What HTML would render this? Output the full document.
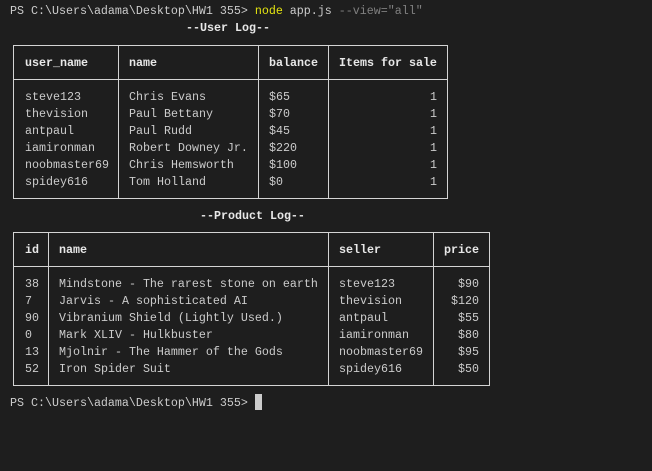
<!DOCTYPE html>
<html><head><style>
body{margin:0;width:652px;height:471px;background:#1e1e1e;overflow:hidden;position:relative;font-family:"Liberation Mono",monospace;font-size:11.67px;color:#cccccc}
pre{margin:0;position:absolute;font:inherit;line-height:17px;white-space:pre}
.b{font-weight:bold;color:#e8e8e8}
.r{text-align:right}
.box{position:absolute;border:1px solid #d4d4d4}
.v{position:absolute;width:1px;background:#d4d4d4}
.h{position:absolute;height:1px;background:#d4d4d4}
</style></head><body>
<pre style="left:10px;top:3px">PS C:\Users\adama\Desktop\HW1 355&gt; <span style="color:#e5e510">node</span> app.js <span style="color:#808080">--view="all"</span></pre>
<pre class="b" style="left:186px;top:20px">--User Log--</pre>

<div class="box" style="left:13px;top:45px;width:433px;height:152px"></div>
<div class="v" style="left:118px;top:45px;height:153px"></div>
<div class="v" style="left:258px;top:45px;height:153px"></div>
<div class="v" style="left:328px;top:45px;height:153px"></div>
<div class="h" style="left:13px;top:79px;width:434px"></div>
<pre class="b" style="left:25px;top:55px">user_name</pre>
<pre class="b" style="left:129px;top:55px">name</pre>
<pre class="b" style="left:269px;top:55px">balance</pre>
<pre class="b" style="left:339px;top:55px">Items for sale</pre>
<pre style="left:25px;top:89px">steve123
thevision
antpaul
iamironman
noobmaster69
spidey616</pre>
<pre style="left:129px;top:89px">Chris Evans
Paul Bettany
Paul Rudd
Robert Downey Jr.
Chris Hemsworth
Tom Holland</pre>
<pre style="left:269px;top:89px">$65
$70
$45
$220
$100
$0</pre>
<pre class="r" style="right:215px;top:89px">1
1
1
1
1
1</pre>

<pre class="b" style="left:200px;top:208px">--Product Log--</pre>

<div class="box" style="left:13px;top:232px;width:475px;height:152px"></div>
<div class="v" style="left:48px;top:232px;height:153px"></div>
<div class="v" style="left:328px;top:232px;height:153px"></div>
<div class="v" style="left:433px;top:232px;height:153px"></div>
<div class="h" style="left:13px;top:266px;width:476px"></div>
<pre class="b" style="left:25px;top:242px">id</pre>
<pre class="b" style="left:59px;top:242px">name</pre>
<pre class="b" style="left:339px;top:242px">seller</pre>
<pre class="b" style="left:444px;top:242px">price</pre>
<pre style="left:25px;top:276px">38
7
90
0
13
52</pre>
<pre style="left:59px;top:276px">Mindstone - The rarest stone on earth
Jarvis - A sophisticated AI
Vibranium Shield (Lightly Used.)
Mark XLIV - Hulkbuster
Mjolnir - The Hammer of the Gods
Iron Spider Suit</pre>
<pre style="left:339px;top:276px">steve123
thevision
antpaul
iamironman
noobmaster69
spidey616</pre>
<pre class="r" style="right:173px;top:276px">$90
$120
$55
$80
$95
$50</pre>

<pre style="left:10px;top:395px">PS C:\Users\adama\Desktop\HW1 355&gt;</pre>
<div style="position:absolute;left:255px;top:394px;width:7px;height:16px;background:#cccccc"></div>
</body></html>
